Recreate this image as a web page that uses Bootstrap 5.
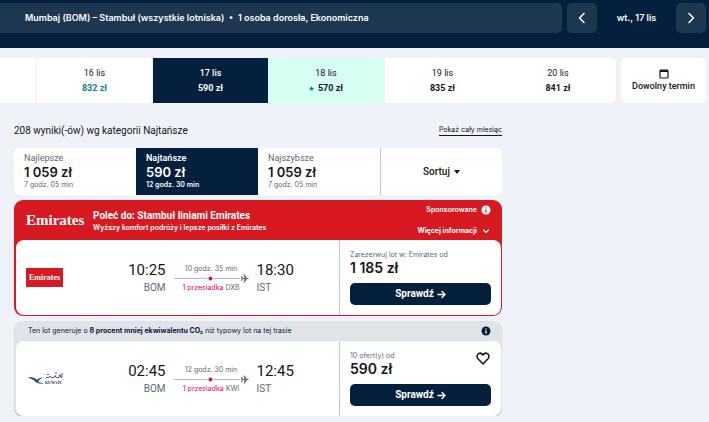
<!DOCTYPE html>
<html lang="pl">
<head>
    <meta charset="UTF-8">
    <meta name="viewport" content="width=device-width, initial-scale=1.0">
    <title>Mumbaj - Stambuł</title>
    <!-- Bootstrap CSS -->
    <link href="https://cdn.jsdelivr.net/npm/bootstrap@5.3.0/dist/css/bootstrap.min.css" rel="stylesheet">
    <style>
        :root {
            --navy: #05203c;
            --navy-light: #1e3750;
            --red: #d71a21;
            --grey: #626971;
            --line: #c1c7cf;
        }

        body {
            background-color: #eff2f8;
            color: #161616;
            font-family: Roboto, "Liberation Sans", sans-serif;
            font-size: 9px;
            line-height: 14px;
        }

        svg {
            display: block;
            flex: none;
        }

        button {
            border: 0;
            padding: 0;
            color: inherit;
            background: none;
        }

        .txt-grey { color: var(--grey); }
        .txt-tiny { font-family: Inter, sans-serif; font-size: 7px; line-height: 10px; }
        .semi { font-weight: 500; }

        /* Pasek wyszukiwania */
        .top-bar {
            background: var(--navy);
            gap: 5px;
            padding: 3px 3px 15px 0;
            color: #fff;
            font-family: Inter, sans-serif;
        }

        .search-summary {
            height: 30px;
            padding-left: 25px;
            background: var(--navy-light);
            border-radius: 0 5px 5px 0;
        }

        .nav-btn {
            width: 30px;
            height: 30px;
            background: var(--navy-light);
            border-radius: 5px;
        }

        .current-day { width: 69px; }

        /* Kalendarz cen */
        .dates-row { gap: 5px; padding: 10px 3px 0 0; }

        .dates-strip {
            height: 45px;
            background: #fff;
            border-radius: 0 5px 5px 0;
        }

        .day-btn { flex: 0 0 116px; line-height: 15px; }
        .day-btn.lined { border-left: 1px solid #eff2f8; }
        .day-btn.selected { background: var(--navy); color: #fff; }
        .day-btn.cheap { background: #d4fff2; }
        .teal { color: #0c838a; }

        .any-date {
            width: 85px;
            background: #fff;
            border-radius: 5px;
        }

        /* Wyniki */
        .results { max-width: 502px; padding-left: 14px; }
        .results-head { padding: 20px 0 10px; line-height: 15px; }
        .results-count { font-size: 10px; font-weight: 400; line-height: 15px; }

        .month-link {
            color: #161616;
            text-decoration: none;
            border-bottom: 1px solid #161616;
        }

        .sort-tabs {
            height: 47px;
            background: #fff;
            border-radius: 6px;
        }

        .sort-tab { flex: 0 0 25%; padding-left: 10px; }
        .sort-tab.selected { background: var(--navy); color: #fff; }
        .sort-tab.selected .txt-grey { color: #fff; font-weight: 600; }
        .sort-label { line-height: 11px; }
        .price { font: 600 14px/16px Inter, sans-serif; }
        .sort-tab .price { font-size: 13px; }
        .sort-more { border-left: 1px solid var(--line); font-size: 10px; }

        .offer {
            margin-top: 5px;
            padding: 0 1px 1px 2px;
            border-radius: 9px;
        }

        .offer.sponsored { background: var(--red); }

        .offer.eco {
            padding-bottom: 0;
            background: #e0e4e9;
            box-shadow: 0 1px 1px rgba(37, 32, 31, .3);
        }

        .promo {
            height: 40px;
            padding: 5px 10px 0;
            color: #fff;
        }

        .promo-logo {
            width: 67px;
            font: bold 15px/30px "Liberation Serif", serif;
        }

        .promo-title { font-size: 10px; font-weight: 700; line-height: 14px; }
        .eco-note { height: 20px; padding: 0 10px 0 12px; color: var(--navy); }

        .ticket {
            height: 75px;
            background: #fff;
            border-radius: 8px;
        }

        .leg { flex: 1 1 0; padding-left: 10px; }
        .carrier { width: 57px; }

        .emirates {
            width: 37px;
            background: var(--red);
            color: #fff;
            font: bold 8px/19px "Liberation Serif", serif;
        }

        .airport { flex: 1 1 0; font-size: 10px; line-height: 15px; }
        .airport .time { font-size: 15px; line-height: 20px; color: #161616; }
        .stops { width: 91px; padding: 2px 8px 0; }
        .pink { color: #e70866; }

        .cta-panel {
            width: 162px;
            padding: 10px;
            border-left: 1px solid var(--line);
        }

        .select-btn {
            height: 22px;
            background: var(--navy);
            color: #fff;
            border-radius: 5px;
            font-size: 10px;
            font-weight: 700;
            gap: 3px;
        }
    </style>
</head>

<body>
    <header class="top-bar d-flex">
        <button class="search-summary flex-grow-1 text-start text-nowrap overflow-hidden fw-semibold">Mumbaj (BOM) – Stambuł (wszystkie lotniska) &nbsp;•&nbsp; 1 osoba dorosła, Ekonomiczna</button>
        <button class="nav-btn d-flex align-items-center justify-content-center" aria-label="Poprzedni dzień">
            <svg width="14" height="14" fill="none" stroke="#fff" stroke-width="1.5" stroke-linecap="round" stroke-linejoin="round"><path d="M9 2.5 4.5 7 9 11.5"/></svg>
        </button>
        <div class="current-day d-flex align-items-center justify-content-center fw-semibold">wt., 17 lis</div>
        <button class="nav-btn d-flex align-items-center justify-content-center" aria-label="Następny dzień">
            <svg width="14" height="14" fill="none" stroke="#fff" stroke-width="1.5" stroke-linecap="round" stroke-linejoin="round"><path d="M5 2.5 9.500 7 5 11.500"/></svg>
        </button>
    </header>

    <section class="dates-row d-flex">
        <div class="dates-strip d-flex flex-grow-1 justify-content-end overflow-hidden">
            <button class="day-btn lined">16 lis<div class="fw-bold teal">832 zł</div></button>
            <button class="day-btn lined selected"><span class="semi">17 lis</span><div class="fw-bold">590 zł</div></button>
            <button class="day-btn cheap">18 lis
                <div class="fw-bold d-flex align-items-center justify-content-center gap-1">
                    <svg width="5" height="5" viewBox="0 0 10 10" fill="#0c838a"><path d="M5 0 6.500 3.400 10 3.800 7.400 6.300 8.100 10 5 8.100 1.900 10 2.600 6.300 0 3.800 3.500 3.400Z"/></svg>570 zł
                </div>
            </button>
            <button class="day-btn lined">19 lis<div class="fw-bold">835 zł</div></button>
            <button class="day-btn">20 lis<div class="fw-bold">841 zł</div></button>
        </div>
        <button class="any-date d-flex flex-column align-items-center justify-content-center semi">
            <svg width="10" height="10" fill="none" stroke="#161616"><rect x="1" y="1" width="8" height="8" rx="1" stroke-width="1.200"/><path d="M1 2h8" stroke-width="2"/></svg>
            Dowolny termin
        </button>
    </section>

    <main class="results">
        <div class="results-head d-flex justify-content-between align-items-center">
            <h1 class="results-count m-0">208 wyniki(-ów) wg kategorii Najtańsze</h1>
            <a class="month-link txt-tiny" href="#">Pokaż cały miesiąc</a>
        </div>

        <div class="sort-tabs d-flex overflow-hidden">
            <button class="sort-tab text-start">
                <div class="sort-label txt-grey">Najlepsze</div>
                <div class="price">1 059 zł</div>
                <div class="txt-tiny txt-grey">7 godz. 05 min</div>
            </button>
            <button class="sort-tab selected text-start">
                <div class="sort-label txt-grey">Najtańsze</div>
                <div class="price">590 zł</div>
                <div class="txt-tiny txt-grey">12 godz. 30 min</div>
            </button>
            <button class="sort-tab text-start">
                <div class="sort-label txt-grey">Najszybsze</div>
                <div class="price">1 059 zł</div>
                <div class="txt-tiny txt-grey">7 godz. 05 min</div>
            </button>
            <button class="sort-tab sort-more d-flex align-items-center justify-content-center gap-1 semi p-0">
                Sortuj
                <svg width="6" height="4" fill="#161616"><path d="M0 0h6L3 4Z"/></svg>
            </button>
        </div>

        <article class="offer sponsored">
            <div class="promo d-flex">
                <div class="promo-logo">Emirates</div>
                <div class="flex-grow-1 pt-1">
                    <div class="promo-title">Poleć do: Stambuł liniami Emirates</div>
                    <div class="txt-tiny fw-semibold">Wyższy komfort podróży i lepsze posiłki z Emirates</div>
                </div>
                <div class="txt-tiny fw-semibold d-flex flex-column align-items-end justify-content-between pb-1">
                    <div class="d-flex align-items-center gap-1">Sponsorowane
                        <svg width="10" height="10"><circle cx="5" cy="5" r="4.500" fill="#fff"/><path d="M5 4.500V7.500M5 2.500v1" stroke="#d71a21" stroke-width="1.300"/></svg>
                    </div>
                    <button class="d-flex align-items-center gap-1 fw-bold">Więcej informacji
                        <svg width="10" height="10" fill="none" stroke="#fff" stroke-width="1.200" stroke-linecap="round"><path d="M2.500 4 5 6.500 7.500 4"/></svg>
                    </button>
                </div>
            </div>
            <div class="ticket d-flex">
                <div class="leg d-flex align-items-center">
                    <div class="carrier"><div class="emirates text-center">Emirates</div></div>
                    <div class="airport txt-grey text-end"><div class="time">10:25</div>BOM</div>
                    <div class="stops txt-tiny txt-grey text-center text-nowrap">
                        10 godz. 35 min
                        <svg width="75" height="9"><path d="M0 4.500H66" stroke="#b2b9c6"/><circle cx="36.500" cy="4.500" r="3" fill="#fff"/><circle cx="36.500" cy="4.500" r="2" fill="#e70866"/><path d="M67 2h1l1 2h1.500L69.500 .5h1L73 4h1.500v1H73L70.500 8.500h-1L70.500 5H69l-1 2h-1l.6-2.500Z" fill="#68697f"/></svg>
                        <span class="pink">1 przesiadka</span> DXB
                    </div>
                    <div class="airport txt-grey"><div class="time">18:30</div>IST</div>
                </div>
                <div class="cta-panel d-flex flex-column">
                    <div class="txt-tiny txt-grey">Zarezerwuj lot w: Emirates od</div>
                    <div class="price">1 185 zł</div>
                    <button class="select-btn d-flex align-items-center justify-content-center mt-auto">Sprawdź
                        <svg width="9" height="9" fill="none" stroke="#fff" stroke-width="1.400" stroke-linecap="round" stroke-linejoin="round"><path d="M1 4.500h7M5 1.500l3 3-3 3"/></svg>
                    </button>
                </div>
            </div>
        </article>

        <article class="offer eco">
            <div class="eco-note txt-tiny d-flex align-items-center justify-content-between">
                <div>Ten lot generuje o <b>8 procent mniej ekwiwalentu CO₂</b> niż typowy lot na tej trasie</div>
                <svg width="10" height="10"><circle cx="5" cy="5" r="4.500" fill="#05203c"/><path d="M5 4.500V7.500M5 2.500v1" stroke="#fff" stroke-width="1.300"/></svg>
            </div>
            <div class="ticket d-flex">
                <div class="leg d-flex align-items-center">
                    <div class="carrier">
                        <svg width="40" height="16" aria-label="Kuwait Airways">
                            <path d="M2 6.500C6 6 9 7 11 9c2-2 4-2.500 6-2.500C14 8 12 9.500 12.500 10.500c1.500 1.500 3 1.500 5 2C12 12.500 10 12 8 9.500 6 8 4 7.500 2 6.500Z" fill="#17366c"/>
                            <path d="M7 8c3 2 4 4 10 4.500" fill="none" stroke="#2c96bd" stroke-width=".8"/>
                            <path d="M20 6.500h3l1-1.500 1 1.500h3l1-2 1 2h3l1-3 1 3h1V2M21 3.500h2M29 2h2" fill="none" stroke="#273661" stroke-width=".8"/>
                            <text x="19" y="13" font-family="Liberation Serif" font-size="4" font-weight="700" fill="#273661">KUWAIT</text>
                        </svg>
                    </div>
                    <div class="airport txt-grey text-end"><div class="time">02:45</div>BOM</div>
                    <div class="stops txt-tiny txt-grey text-center text-nowrap">
                        12 godz. 30 min
                        <svg width="75" height="9"><path d="M0 4.500H66" stroke="#b2b9c6"/><circle cx="36.500" cy="4.500" r="3" fill="#fff"/><circle cx="36.500" cy="4.500" r="2" fill="#e70866"/><path d="M67 2h1l1 2h1.500L69.500 .5h1L73 4h1.500v1H73L70.500 8.500h-1L70.500 5H69l-1 2h-1l.6-2.500Z" fill="#68697f"/></svg>
                        <span class="pink">1 przesiadka</span> KWI
                    </div>
                    <div class="airport txt-grey"><div class="time">12:45</div>IST</div>
                </div>
                <div class="cta-panel d-flex flex-column">
                    <div class="d-flex justify-content-between align-items-start">
                        <div>
                            <div class="txt-tiny txt-grey">10 ofert(y) od</div>
                            <div class="price">590 zł</div>
                        </div>
                        <button aria-label="Zapisz">
                            <svg width="15" height="14" fill="none" stroke="#161616" stroke-width="1.500" stroke-linejoin="round"><path d="M7 13 2 7.800C.5 6 1 3.500 2.500 2.600 4.300 1.600 6 2.500 7 4 8 2.500 9.700 1.600 11.500 2.600 13 3.500 13.500 6 12 7.800Z"/></svg>
                        </button>
                    </div>
                    <button class="select-btn d-flex align-items-center justify-content-center mt-auto">Sprawdź
                        <svg width="9" height="9" fill="none" stroke="#fff" stroke-width="1.400" stroke-linecap="round" stroke-linejoin="round"><path d="M1 4.500h7M5 1.500l3 3-3 3"/></svg>
                    </button>
                </div>
            </div>
        </article>
    </main>
    <!-- Bootstrap JS -->
    <script src="https://cdn.jsdelivr.net/npm/bootstrap@5.3.0/dist/js/bootstrap.bundle.min.js"></script>
</body>
</html>
